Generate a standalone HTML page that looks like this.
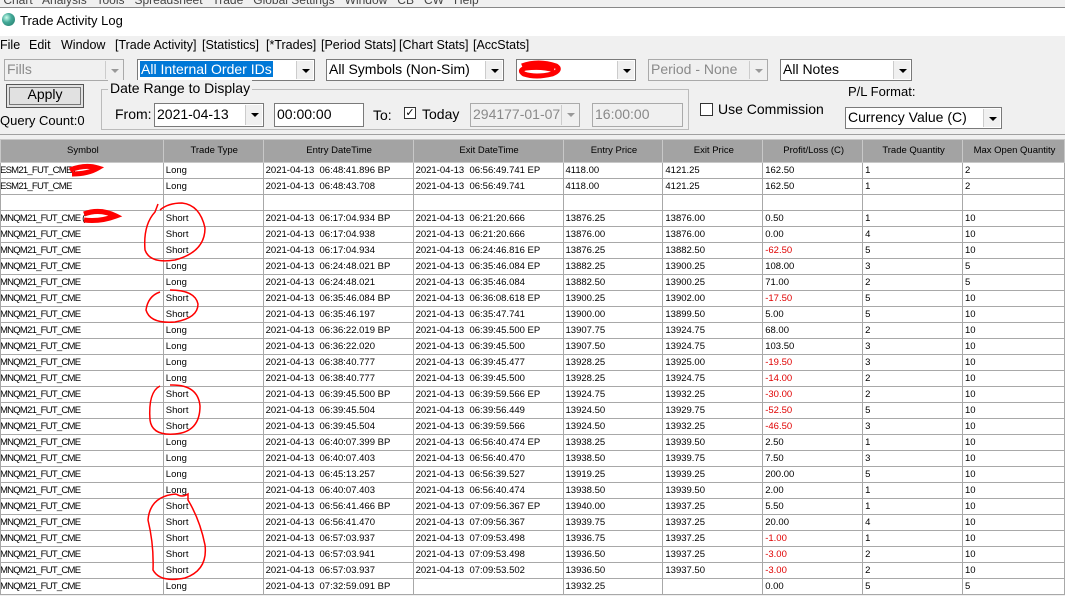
<!DOCTYPE html>
<html><head><meta charset="utf-8"><style>
*{box-sizing:border-box;margin:0;padding:0}
body{width:1065px;height:596px;overflow:hidden;background:#f0f0f0;font-family:"Liberation Sans",sans-serif;position:relative;color:#000}
.a{position:absolute;white-space:nowrap}
.m{position:absolute;top:38px;font-size:12.5px}
.cb{position:absolute;background:#fff;border:1px solid #7a7a7a;font-size:14px;line-height:18px;padding-left:2px;height:22px}
.cb.dis{background:#f0f0f0;color:#8a8a8a;border-color:#aaa}
.dd{position:absolute;right:1px;top:1px;width:17px;height:18px;background:#f0f0f0;border-left:1px solid #ccc}
.dd:after{content:"";position:absolute;left:5px;top:8px;border-left:4px solid transparent;border-right:4px solid transparent;border-top:4px solid #000}
.dis .dd:after{border-top-color:#999}
.tf{position:absolute;background:#fff;border:1px solid #7a7a7a;font-size:14px;line-height:20px;padding-left:2px;height:24px}
table{position:absolute;left:0;top:139px;border-collapse:collapse;table-layout:fixed;font-size:9.5px}
td,th{height:16px;border:1px solid #a8a8a8;padding:0 0 0 2px;white-space:nowrap;overflow:hidden;line-height:14px}
td:first-child{padding-left:0;text-indent:-2px;letter-spacing:-0.75px}
th{height:23px;background:#a3a3a3;font-weight:normal;text-align:center;border-color:#c8c8c8}
td{background:#fff}
.r{color:#e00000}
</style></head><body>
<div class="a" style="left:0;top:0;width:1065px;height:8px;background:#f0f0f0;border-bottom:1px solid #888;font-size:12px;line-height:0px;color:#444;overflow:hidden">&nbsp;Chart &nbsp; Analysis &nbsp; Tools &nbsp; Spreadsheet &nbsp; Trade &nbsp; Global Settings &nbsp; Window &nbsp; CB &nbsp; CW &nbsp; Help</div>
<div class="a" style="left:0;top:8px;width:1065px;height:28px;background:#fff"></div>
<div class="a" style="left:2px;top:13px;width:13px;height:13px;border-radius:50%;background:radial-gradient(circle at 35% 35%,#cfe 0,#4a9 40%,#276 100%)"></div>
<div class="a" style="left:20px;top:13px;font-size:13px">Trade Activity Log</div>
<span class="m" style="left:0">File</span><span class="m" style="left:29px">Edit</span><span class="m" style="left:61px">Window</span><span class="m" style="left:115px">[Trade Activity]</span><span class="m" style="left:202px">[Statistics]</span><span class="m" style="left:266px">[*Trades]</span><span class="m" style="left:321px">[Period Stats]</span><span class="m" style="left:399px">[Chart Stats]</span><span class="m" style="left:473px">[AccStats]</span>
<div class="cb dis" style="left:4px;top:59px;width:120px">Fills<span class="dd"></span></div>
<div class="cb" style="left:137px;top:59px;width:178px"><span style="background:#0078d7;color:#fff;padding:0 1px">All Internal Order IDs</span><span class="dd"></span></div>
<div class="cb" style="left:326px;top:59px;width:178px">All Symbols (Non-Sim)<span class="dd"></span></div>
<div class="cb" style="left:516px;top:59px;width:120px"><span class="dd"></span></div>
<svg class="a" style="left:518px;top:60px" width="45" height="20"><path d="M4 6 Q20 0 38 6 Q44 10 34 14 Q18 18 6 14 Q0 10 8 8 Q24 6 36 10" stroke="#f00" stroke-width="5" fill="none"/></svg>
<div class="cb dis" style="left:648px;top:59px;width:120px">Period - None<span class="dd"></span></div>
<div class="cb" style="left:780px;top:59px;width:132px">All Notes<span class="dd"></span></div>
<div class="a" style="left:6px;top:84px;width:78px;height:24px;border:1px solid #555;background:#e1e1e1;box-shadow:inset 0 0 0 2px #e1e1e1,inset 0 0 0 3px #777"></div>
<div class="a" style="left:6px;top:86px;width:78px;text-align:center;font-size:14px">Apply</div>
<div class="a" style="left:0;top:113px;font-size:13px">Query Count:0</div>
<div class="a" style="left:101px;top:89px;width:588px;height:41px;border:1px solid #bbb"></div>
<div class="a" style="left:108px;top:80px;font-size:14px;background:#f0f0f0;padding:0 2px">Date Range to Display</div>
<div class="a" style="left:115px;top:106px;font-size:14px">From:</div>
<div class="cb" style="left:154px;top:103px;width:110px;height:24px;line-height:20px">2021-04-13<span class="dd" style="height:20px"></span></div>
<div class="tf" style="left:274px;top:103px;width:90px">00:00:00</div>
<div class="a" style="left:373px;top:107px;font-size:14px">To:</div>
<div class="a" style="left:404px;top:107px;width:12px;height:12px;border:1px solid #333;background:#fff;font-size:11px;line-height:10px;text-align:center">✓</div>
<div class="a" style="left:422px;top:106px;font-size:14px">Today</div>
<div class="cb dis" style="left:470px;top:103px;width:110px;height:24px;line-height:20px">294177-01-07<span class="dd" style="height:20px"></span></div>
<div class="tf" style="left:592px;top:103px;width:91px;background:#f0f0f0;color:#888;border-color:#aaa">16:00:00</div>
<div class="a" style="left:700px;top:103px;width:13px;height:13px;border:1px solid #333;background:#fff"></div>
<div class="a" style="left:718px;top:101px;font-size:14px">Use Commission</div>
<div class="a" style="left:848px;top:84px;font-size:13px">P/L Format:</div>
<div class="cb" style="left:845px;top:107px;width:157px">Currency Value (C)<span class="dd"></span></div>
<div class="a" style="left:0;top:134px;width:1065px;height:1px;background:#a0a0a0"></div>
<table>
<colgroup><col style="width:163px"><col style="width:100px"><col style="width:150px"><col style="width:150px"><col style="width:100px"><col style="width:100px"><col style="width:100px"><col style="width:100px"><col style="width:102px"></colgroup>
<tr><th>Symbol</th><th>Trade Type</th><th>Entry DateTime</th><th>Exit DateTime</th><th>Entry Price</th><th>Exit Price</th><th>Profit/Loss (C)</th><th>Trade Quantity</th><th>Max Open Quantity</th></tr>
<tr><td>ESM21_FUT_CME (</td><td>Long</td><td>2021-04-13 &nbsp;06:48:41.896 BP</td><td>2021-04-13 &nbsp;06:56:49.741 EP</td><td>4118.00</td><td>4121.25</td><td>162.50</td><td>1</td><td>2</td></tr>
<tr><td>ESM21_FUT_CME</td><td>Long</td><td>2021-04-13 &nbsp;06:48:43.708</td><td>2021-04-13 &nbsp;06:56:49.741</td><td>4118.00</td><td>4121.25</td><td>162.50</td><td>1</td><td>2</td></tr>
<tr><td></td><td></td><td></td><td></td><td></td><td></td><td></td><td></td><td></td></tr>
<tr><td>MNQM21_FUT_CME (</td><td>Short</td><td>2021-04-13 &nbsp;06:17:04.934 BP</td><td>2021-04-13 &nbsp;06:21:20.666</td><td>13876.25</td><td>13876.00</td><td>0.50</td><td>1</td><td>10</td></tr>
<tr><td>MNQM21_FUT_CME</td><td>Short</td><td>2021-04-13 &nbsp;06:17:04.938</td><td>2021-04-13 &nbsp;06:21:20.666</td><td>13876.00</td><td>13876.00</td><td>0.00</td><td>4</td><td>10</td></tr>
<tr><td>MNQM21_FUT_CME</td><td>Short</td><td>2021-04-13 &nbsp;06:17:04.934</td><td>2021-04-13 &nbsp;06:24:46.816 EP</td><td>13876.25</td><td>13882.50</td><td class="r">-62.50</td><td>5</td><td>10</td></tr>
<tr><td>MNQM21_FUT_CME</td><td>Long</td><td>2021-04-13 &nbsp;06:24:48.021 BP</td><td>2021-04-13 &nbsp;06:35:46.084 EP</td><td>13882.25</td><td>13900.25</td><td>108.00</td><td>3</td><td>5</td></tr>
<tr><td>MNQM21_FUT_CME</td><td>Long</td><td>2021-04-13 &nbsp;06:24:48.021</td><td>2021-04-13 &nbsp;06:35:46.084</td><td>13882.50</td><td>13900.25</td><td>71.00</td><td>2</td><td>5</td></tr>
<tr><td>MNQM21_FUT_CME</td><td>Short</td><td>2021-04-13 &nbsp;06:35:46.084 BP</td><td>2021-04-13 &nbsp;06:36:08.618 EP</td><td>13900.25</td><td>13902.00</td><td class="r">-17.50</td><td>5</td><td>10</td></tr>
<tr><td>MNQM21_FUT_CME</td><td>Short</td><td>2021-04-13 &nbsp;06:35:46.197</td><td>2021-04-13 &nbsp;06:35:47.741</td><td>13900.00</td><td>13899.50</td><td>5.00</td><td>5</td><td>10</td></tr>
<tr><td>MNQM21_FUT_CME</td><td>Long</td><td>2021-04-13 &nbsp;06:36:22.019 BP</td><td>2021-04-13 &nbsp;06:39:45.500 EP</td><td>13907.75</td><td>13924.75</td><td>68.00</td><td>2</td><td>10</td></tr>
<tr><td>MNQM21_FUT_CME</td><td>Long</td><td>2021-04-13 &nbsp;06:36:22.020</td><td>2021-04-13 &nbsp;06:39:45.500</td><td>13907.50</td><td>13924.75</td><td>103.50</td><td>3</td><td>10</td></tr>
<tr><td>MNQM21_FUT_CME</td><td>Long</td><td>2021-04-13 &nbsp;06:38:40.777</td><td>2021-04-13 &nbsp;06:39:45.477</td><td>13928.25</td><td>13925.00</td><td class="r">-19.50</td><td>3</td><td>10</td></tr>
<tr><td>MNQM21_FUT_CME</td><td>Long</td><td>2021-04-13 &nbsp;06:38:40.777</td><td>2021-04-13 &nbsp;06:39:45.500</td><td>13928.25</td><td>13924.75</td><td class="r">-14.00</td><td>2</td><td>10</td></tr>
<tr><td>MNQM21_FUT_CME</td><td>Short</td><td>2021-04-13 &nbsp;06:39:45.500 BP</td><td>2021-04-13 &nbsp;06:39:59.566 EP</td><td>13924.75</td><td>13932.25</td><td class="r">-30.00</td><td>2</td><td>10</td></tr>
<tr><td>MNQM21_FUT_CME</td><td>Short</td><td>2021-04-13 &nbsp;06:39:45.504</td><td>2021-04-13 &nbsp;06:39:56.449</td><td>13924.50</td><td>13929.75</td><td class="r">-52.50</td><td>5</td><td>10</td></tr>
<tr><td>MNQM21_FUT_CME</td><td>Short</td><td>2021-04-13 &nbsp;06:39:45.504</td><td>2021-04-13 &nbsp;06:39:59.566</td><td>13924.50</td><td>13932.25</td><td class="r">-46.50</td><td>3</td><td>10</td></tr>
<tr><td>MNQM21_FUT_CME</td><td>Long</td><td>2021-04-13 &nbsp;06:40:07.399 BP</td><td>2021-04-13 &nbsp;06:56:40.474 EP</td><td>13938.25</td><td>13939.50</td><td>2.50</td><td>1</td><td>10</td></tr>
<tr><td>MNQM21_FUT_CME</td><td>Long</td><td>2021-04-13 &nbsp;06:40:07.403</td><td>2021-04-13 &nbsp;06:56:40.470</td><td>13938.50</td><td>13939.75</td><td>7.50</td><td>3</td><td>10</td></tr>
<tr><td>MNQM21_FUT_CME</td><td>Long</td><td>2021-04-13 &nbsp;06:45:13.257</td><td>2021-04-13 &nbsp;06:56:39.527</td><td>13919.25</td><td>13939.25</td><td>200.00</td><td>5</td><td>10</td></tr>
<tr><td>MNQM21_FUT_CME</td><td>Long</td><td>2021-04-13 &nbsp;06:40:07.403</td><td>2021-04-13 &nbsp;06:56:40.474</td><td>13938.50</td><td>13939.50</td><td>2.00</td><td>1</td><td>10</td></tr>
<tr><td>MNQM21_FUT_CME</td><td>Short</td><td>2021-04-13 &nbsp;06:56:41.466 BP</td><td>2021-04-13 &nbsp;07:09:56.367 EP</td><td>13940.00</td><td>13937.25</td><td>5.50</td><td>1</td><td>10</td></tr>
<tr><td>MNQM21_FUT_CME</td><td>Short</td><td>2021-04-13 &nbsp;06:56:41.470</td><td>2021-04-13 &nbsp;07:09:56.367</td><td>13939.75</td><td>13937.25</td><td>20.00</td><td>4</td><td>10</td></tr>
<tr><td>MNQM21_FUT_CME</td><td>Short</td><td>2021-04-13 &nbsp;06:57:03.937</td><td>2021-04-13 &nbsp;07:09:53.498</td><td>13936.75</td><td>13937.25</td><td class="r">-1.00</td><td>1</td><td>10</td></tr>
<tr><td>MNQM21_FUT_CME</td><td>Short</td><td>2021-04-13 &nbsp;06:57:03.941</td><td>2021-04-13 &nbsp;07:09:53.498</td><td>13936.50</td><td>13937.25</td><td class="r">-3.00</td><td>2</td><td>10</td></tr>
<tr><td>MNQM21_FUT_CME</td><td>Short</td><td>2021-04-13 &nbsp;06:57:03.937</td><td>2021-04-13 &nbsp;07:09:53.502</td><td>13936.50</td><td>13937.50</td><td class="r">-3.00</td><td>2</td><td>10</td></tr>
<tr><td>MNQM21_FUT_CME</td><td>Long</td><td>2021-04-13 &nbsp;07:32:59.091 BP</td><td></td><td>13932.25</td><td></td><td>0.00</td><td>5</td><td>5</td></tr>
</table>
<svg class="a" style="left:0;top:0" width="1065" height="596" fill="none" stroke="#f00">
<path d="M70 170 Q85 164 98 168 Q88 174 72 174" stroke-width="5"/>
<path d="M84 214 Q100 208 116 216 Q100 222 84 220" stroke-width="5"/>
<path d="M158 204 L155 212 Q143 225 145 250 Q150 264 175 260 Q205 252 205 228 Q200 205 182 203 Q168 203 160 210" stroke-width="1.5"/>
<path d="M160 292 Q148 296 146 310 Q150 324 175 322 Q198 318 198 304 Q195 290 170 290" stroke-width="1.5"/>
<path d="M160 386 Q148 392 150 420 Q152 436 175 434 Q200 432 200 406 Q198 384 170 385" stroke-width="1.5"/>
<path d="M176 494 Q150 496 148 520 Q154 545 153 570 Q160 583 185 578 Q208 570 205 545 Q200 520 188 500 L188 494 Q182 498 176 494" stroke-width="1.5"/>
</svg>
</body></html>
